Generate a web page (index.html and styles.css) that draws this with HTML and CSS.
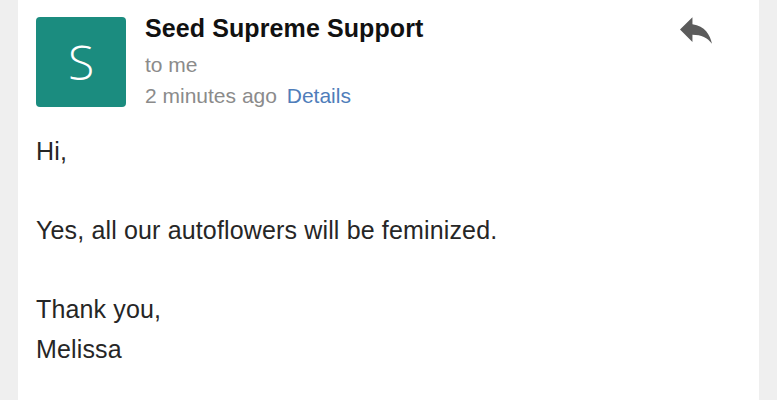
FILE: index.html
```html
<!DOCTYPE html>
<html lang="en">
<head>
    <meta charset="UTF-8">
    <meta name="viewport" content="width=device-width, initial-scale=1.0">
    <title>Seed Supreme Support</title>
    <link rel="stylesheet" href="styles.css">
</head>
<body>
    <div class="mail">
        <div class="mail-header">
            <div class="avatar">S</div>
            <div class="sender">
                <div class="sender-name">Seed Supreme Support</div>
                <div class="meta meta-to">to me</div>
                <div class="meta meta-time">2 minutes ago <a href="#" class="details">Details</a></div>
            </div>
            <!-- reply button -->
            <svg class="reply" viewBox="3 5 18 15" width="32" height="27">
                <path d="M10 9V5l-7 7 7 7v-4.1c5 0 8.5 1.6 11 5.1-1-5-4-10-11-11z" fill="#5b5b5b"/>
            </svg>
        </div>

        <div class="mail-body">
            <p>Hi,</p>
            <p>Yes, all our autoflowers will be feminized.</p>
            <p>Thank you,<br>Melissa</p>
        </div>
    </div>
</body>
</html>
```

FILE: styles.css
```css
body {
    margin: 0;
    background-color: #efefef;
    font-family: "Liberation Sans", Arial, sans-serif;
}
.mail {
    margin: 0 18px;
    min-height: 400px;
    background-color: #fff;
}
.mail-header {
    display: flex;
    align-items: flex-start;
    padding: 17px 47px 0 18px;
}
.avatar {
    width: 90px;
    height: 90px;
    flex-shrink: 0;
    border-radius: 4px;
    background-color: #1b8c7f;
    color: #fff;
    font-family: "Open Sans", sans-serif;
    font-weight: 300;
    font-size: 48px;
    line-height: 90px;
    text-align: center;
}
.sender {
    margin-left: 19px;
}
.sender-name {
    font-size: 25px;
    font-weight: bold;
    line-height: 22px;
    letter-spacing: 0.1px;
    color: #111;
}
.meta {
    font-size: 21px;
    line-height: 28px;
    color: #8b8b8b;
}
.meta-to {
    margin-top: 12px;
}
.meta-time {
    margin-top: 3px;
}
.details {
    margin-left: 4px;
    color: #4f7dba;
    text-decoration: none;
}
.reply {
    margin-left: auto;
}
.mail-body {
    padding: 21px 18px 0;
    font-size: 25px;
    line-height: 40px;
    letter-spacing: 0.15px;
    color: #262626;
}
.mail-body p {
    margin: 0 0 39px;
}
```
